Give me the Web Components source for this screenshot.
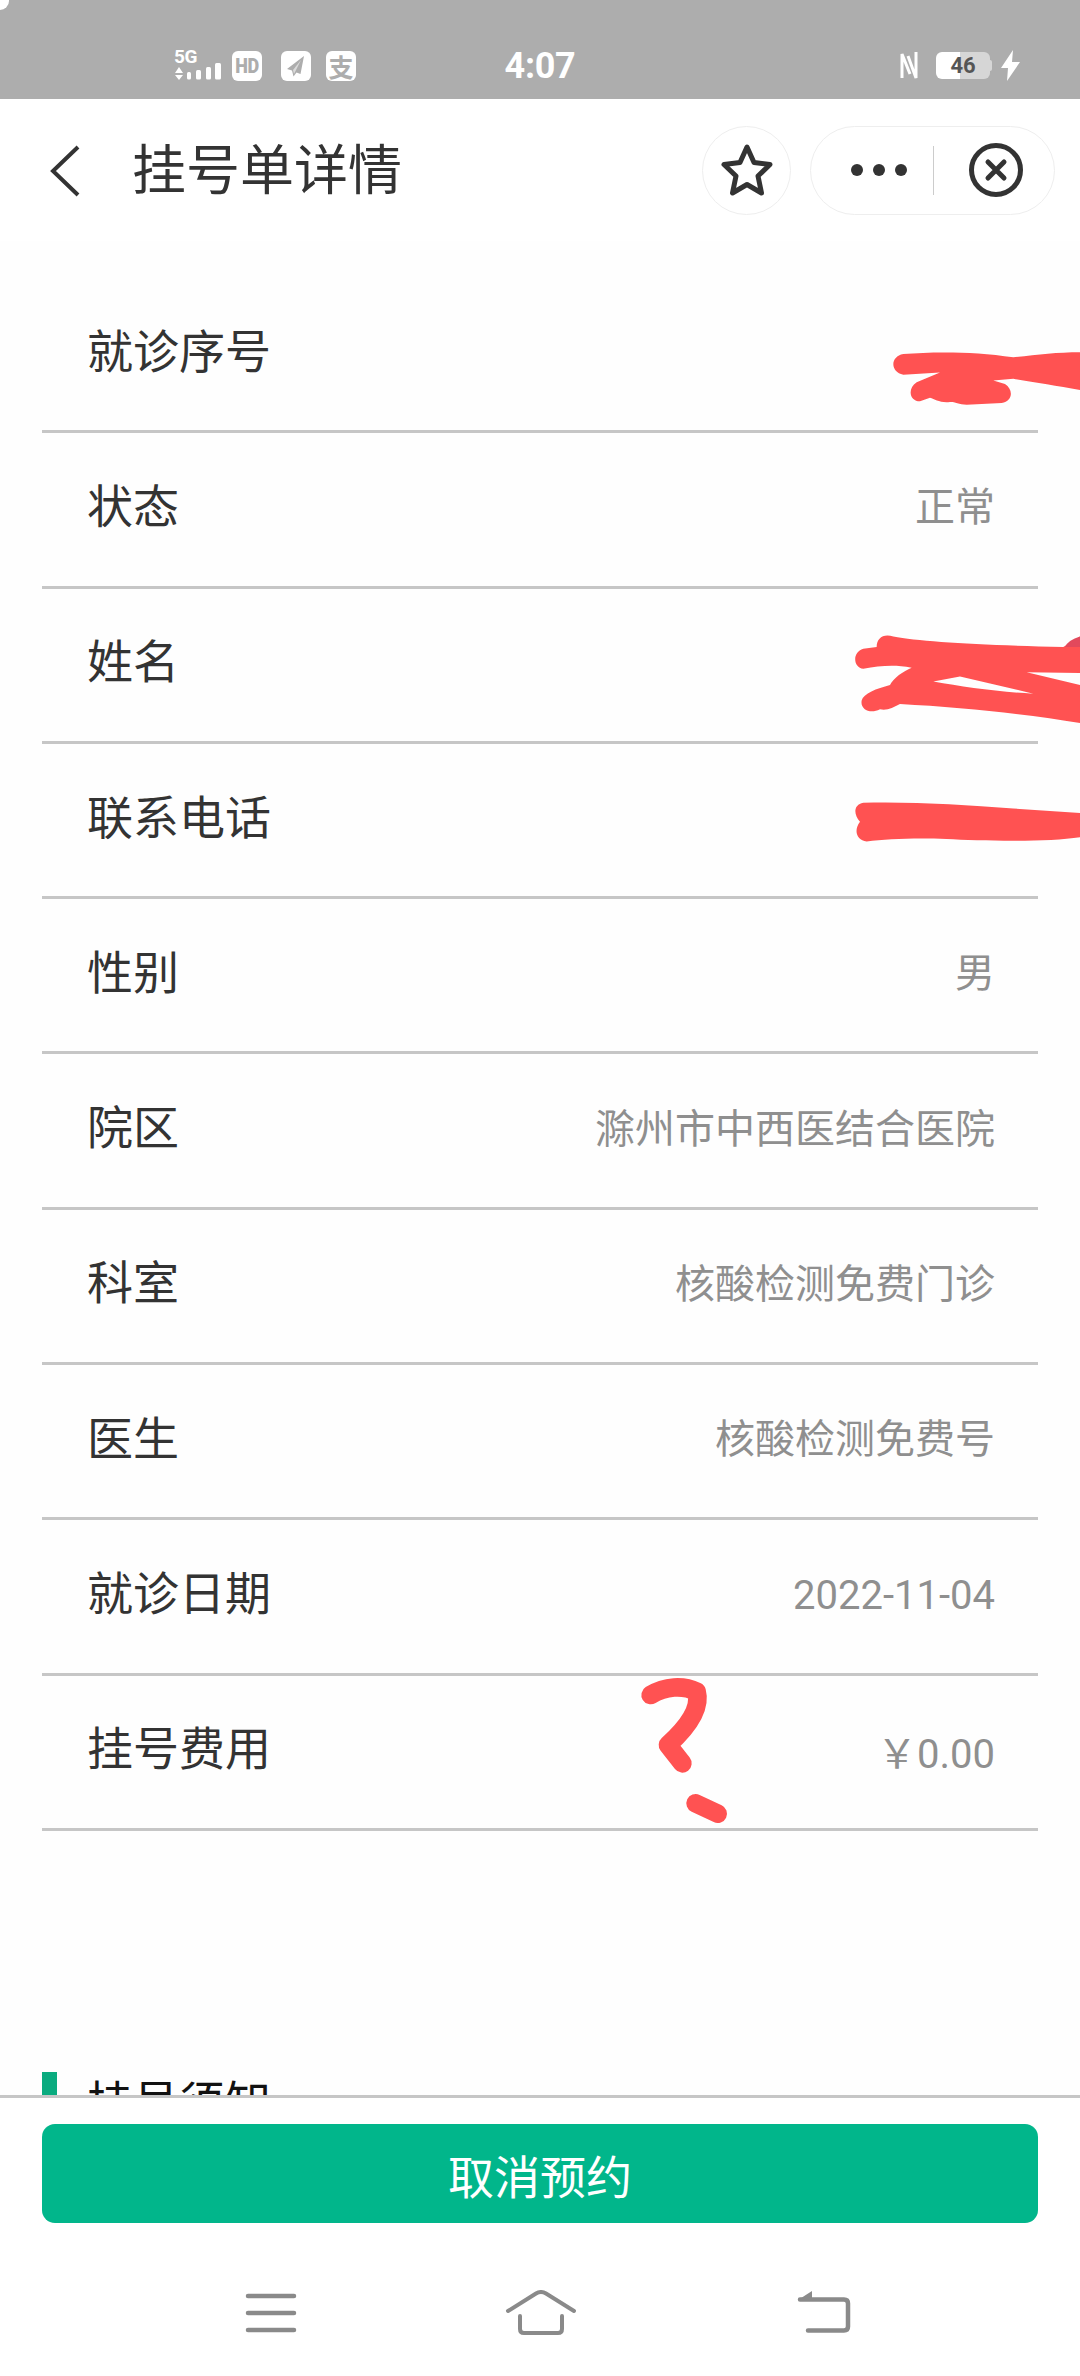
<!DOCTYPE html>
<html lang="zh-CN">
<head>
<meta charset="utf-8">
<title>挂号单详情</title>
<style>
html,body{margin:0;padding:0;background:#fff}
body{font-family:Roboto,"Noto Sans CJK SC",sans-serif}
.num{display:block;padding-top:8px}
</style>
</head>
<body>
<app-screen>
  <status-bar></status-bar>
  <title-bar>挂号单详情</title-bar>
  <main-area>
    <detail-list>
      <detail-row>就诊序号</detail-row>
      <detail-row>状态<span slot="value">正常</span></detail-row>
      <detail-row>姓名</detail-row>
      <detail-row>联系电话</detail-row>
      <detail-row>性别<span slot="value">男</span></detail-row>
      <detail-row>院区<span slot="value">滁州市中西医结合医院</span></detail-row>
      <detail-row>科室<span slot="value">核酸检测免费门诊</span></detail-row>
      <detail-row>医生<span slot="value">核酸检测免费号</span></detail-row>
      <detail-row>就诊日期<span slot="value" class="num">2022-11-04</span></detail-row>
      <detail-row>挂号费用<span slot="value" class="num" style="font-family:'Noto Sans CJK SC',sans-serif"><span>&#xFFE5;</span><span style="font-family:Roboto,sans-serif">0.00</span></span></detail-row>
    </detail-list>
    <section-title>挂号须知</section-title>
  </main-area>
  <action-footer>取消预约</action-footer>
  <nav-keys></nav-keys>
  <scribble-layer></scribble-layer>
</app-screen>
<script>
function def(name, html){
  customElements.define(name, class extends HTMLElement{
    constructor(){super();this.attachShadow({mode:'open'}).innerHTML=html;}
  });
}
def('app-screen',`<style>:host{display:flex;flex-direction:column;position:relative;width:1080px;height:2376px;overflow:hidden;background:#fff;font-family:Roboto,"Noto Sans CJK SC",sans-serif}</style><slot></slot>`);

def('status-bar',`<style>
:host{display:grid;grid-template-columns:1fr auto 1fr;align-items:center;height:99px;box-sizing:border-box;padding-top:32px;background:#adadad;color:#fff;position:relative;flex:none}
.corner{position:absolute;left:0;top:0;width:9px;height:10px;background:#fff;border-bottom-right-radius:9px}
.left{display:flex;align-items:center;padding-left:174px}
.right{display:flex;align-items:center;justify-content:flex-end;padding-right:60px}
.sig{width:42px;height:31px;margin-right:16px;position:relative;display:block}
.five{position:absolute;left:0;top:-3px;font:700 19px/20px Roboto,sans-serif;letter-spacing:-.5px}
.tile{width:30px;height:30px;border-radius:6px;background:#fff;color:#adadad;display:flex;align-items:center;justify-content:center;margin-right:19px}
.hd{font:900 20px/1 Roboto,sans-serif;letter-spacing:-.5px;transform:scaleX(.9)}
.zhi{font:700 25px/30px "Noto Sans CJK SC",sans-serif}
.time{font:700 36px/1 Roboto,sans-serif;letter-spacing:-.3px}
.batt{width:54px;height:27px;margin:0 11px 0 18px;border-radius:6px;background:linear-gradient(90deg,#fff 0 24px,#d6d6d6 24px);color:#555;font:700 22px/27px Roboto,sans-serif;text-align:center;position:relative;display:block}
.batt i{position:absolute;right:-2px;top:8px;width:2px;height:11px;background:#d6d6d6;border-radius:0 2px 2px 0}
svg{display:block}
</style>
<div class="corner"></div>
<div class="left">
  <span class="sig"><span class="five">5G</span>
    <svg width="48" height="31" viewBox="0 0 48 31" style="position:absolute;left:0;top:0"><path fill="#fff" d="M5 17l4 6H1zM1 25h8l-4 5z"/><rect x="13" y="22" width="4" height="7.500" rx="1.500" fill="#fff"/><rect x="22" y="20" width="5" height="9.500" rx="1.500" fill="#fff"/><rect x="32" y="17" width="5" height="12.500" rx="1.500" fill="#fff"/><rect x="41" y="13" width="6" height="16.500" rx="1.500" fill="#fff"/></svg>
  </span>
  <span class="tile"><span class="hd">HD</span></span>
  <span class="tile" style="margin-right:15px"><svg width="30" height="30" viewBox="0 0 30 30"><path fill="#adadad" d="M23 5L6 18l5 1.500 1.500 6 3-4 4 1.500z"/><path fill="#fff" d="M20 9l-8 10 1 4z" opacity=".55"/></svg></span>
  <span class="tile" style="margin-right:0"><span class="zhi">支</span></span>
</div>
<div class="time">4:07</div>
<div class="right">
  <svg width="18" height="31" viewBox="0 0 18 31"><path d="M2 28V4l8 20M16 2v26L8 6" fill="none" stroke="#fff" stroke-width="3"/></svg>
  <span class="batt">46<i></i></span>
  <svg width="19" height="31" viewBox="0 0 19 31"><path fill="#fff" d="M12 0L0 18h7L6 31l13-19h-8z"/></svg>
</div>`);

def('title-bar',`<style>
:host{display:flex;align-items:center;height:142px;flex:none;position:relative;color:#333;font-size:54px;font-family:"Noto Sans CJK SC",sans-serif;font-weight:400}
.back{margin-left:48px;width:34px;height:54px;display:block;margin-top:1px}
.t{margin-left:50px;flex:1;line-height:1;margin-top:-6px}
.star{width:89px;height:89px;box-sizing:border-box;border:1px solid #eee;border-radius:50%;display:flex;align-items:center;justify-content:center;margin-right:19px}
.star svg{margin-left:1px}
.cap{width:245px;height:89px;box-sizing:border-box;border:1px solid #eee;border-radius:45px;display:flex;align-items:center;margin-right:25px;position:relative}
.sep{width:1px;height:49px;background:#ccc;margin:0 34px 0 25px}
.dots{margin-left:39px;display:block}
svg{display:block}
</style>
<svg class="back" viewBox="0 0 34 54"><path d="M30 3L5 27l25 24" fill="none" stroke="#333" stroke-width="4"/></svg>
<div class="t"><slot></slot></div>
<div class="star"><svg width="52" height="54" viewBox="0 0 52 54"><path d="M26 4l7 15.500 16 2-12 11.500 3.500 17L26 41.500 11.500 50 15 33 3 21.500l16-2z" fill="none" stroke="#333" stroke-width="5" stroke-linejoin="round"/></svg></div>
<div class="cap">
  <svg class="dots" width="58" height="14" viewBox="0 0 58 14"><circle cx="7" cy="7" r="6" fill="#333"/><circle cx="29" cy="7" r="6" fill="#333"/><circle cx="51" cy="7" r="6" fill="#333"/></svg>
  <div class="sep"></div>
  <svg width="56" height="56" viewBox="0 0 56 56"><circle cx="28" cy="28" r="24.500" fill="none" stroke="#333" stroke-width="5"/><path d="M20 20l16 16M36 20L20 36" stroke="#333" stroke-width="5" stroke-linecap="round"/></svg>
</div>`);

def('main-area',`<style>:host{display:block;flex:1;min-height:0;overflow:hidden;background:#fefefe}</style><slot></slot>`);
def('detail-list',`<style>:host{display:block;margin:37px 42px 0}</style><slot></slot>`);
def('detail-row',`<style>
:host{display:flex;align-items:center;justify-content:space-between;height:155.3px;box-sizing:border-box;padding:0 43px 13px 45px;border-bottom:3px solid #c6c6c6;font-family:"Noto Sans CJK SC",sans-serif;font-size:46px;color:#333}
.v{font-family:Roboto,"Noto Sans CJK SC",sans-serif;font-size:40px;color:#8f8f8f;margin-top:3px}
</style><div><slot></slot></div><div class="v"><slot name="value"></slot></div>`);
def('section-title',`<style>
:host{display:flex;align-items:flex-start;margin:241px 42px 0;font:400 46px/48px "Noto Sans CJK SC",sans-serif;color:#111}
.m{width:15px;height:48px;background:#0aab7f;margin-right:30px;flex:none}
</style><span class="m"></span><span style="margin-top:3px"><slot></slot></span>`);
def('action-footer',`<style>
:host{display:block;flex:none;box-sizing:border-box;border-top:3px solid #c6c6c6;padding:26px 42px 0;background:#fff}
.b{height:99px;border-radius:13px;background:#01b68b;color:#fff;display:flex;align-items:center;justify-content:center;font:400 46px/1 "Noto Sans CJK SC",sans-serif}
</style><div class="b"><slot></slot></div>`);
def('nav-keys',`<style>
:host{display:flex;flex:none;align-items:flex-start;height:153px;box-sizing:border-box;padding:67px 0 0 245px;background:#fff}
svg{display:block}
</style>
<svg width="52" height="44" viewBox="0 0 52 44"><path d="M3 6h46M3 23h46M3 40h46" stroke="#8a8a8a" stroke-width="4.500" stroke-linecap="round" fill="none"/></svg>
<svg width="72" height="46" viewBox="0 0 72 46" style="margin-left:208px"><path d="M3 21L31 3.500Q36 .5 41 3.500L69 21" stroke="#8a8a8a" stroke-width="4" stroke-linecap="round" fill="none"/><path d="M15 26v13q0 4 4 4h34q4 0 4-4V26" stroke="#8a8a8a" stroke-width="4" stroke-linecap="round" fill="none"/></svg>
<svg width="54" height="44" viewBox="0 0 54 44" style="margin-left:220px"><path d="M1 10L15 1v9z" fill="#8a8a8a"/><path d="M3 9.500h44q4 0 4 4v23q0 4-4 4H11" stroke="#8a8a8a" stroke-width="4.500" stroke-linecap="round" fill="none"/></svg>`);

def('scribble-layer',`<style>:host{position:absolute;left:0;top:0;width:1080px;height:2376px;pointer-events:none}svg{display:block}</style>
<svg width="1080" height="2376" viewBox="0 0 1080 2376">
<g transform="translate(680 320) scale(.33333 .346)" fill="#ff5252">
<path d="M670 98C760 92 880 90 1000 108C1070 100 1130 93 1200 93L1200 202C1130 190 1060 180 1000 170L940 175L975 185C1000 200 1000 235 965 240L860 245C835 243 820 235 810 237C780 240 765 230 750 225L720 235C690 235 680 200 710 180L780 152L670 158C630 150 630 105 670 98Z"/>
<path fill-rule="evenodd" d="M550 950L590 945C590 920 610 905 640 915C720 930 900 940 1150 945L1200 915L1200 1020L1040 1018L1200 1055L1200 1165C1050 1140 850 1120 660 1110C640 1120 620 1130 600 1125C570 1140 540 1125 545 1100C550 1080 590 1065 630 1055C640 1035 670 1015 695 1005C640 995 600 1000 550 1008C520 1005 515 960 550 950ZM760 1045L840 1030L1060 1080C950 1075 850 1060 760 1045Z"/>
<path fill="#e2495c" d="M1155 945Q1165 925 1200 915V945Z"/>
<path d="M550 1395C700 1392 850 1400 1000 1412L1200 1425L1200 1495C1100 1510 900 1505 800 1500C700 1497 620 1500 560 1507C530 1505 520 1475 540 1450C520 1430 520 1400 550 1395Z"/>
</g>
<g transform="translate(600 1650) scale(.33333)" fill="none" stroke="#ff5252" stroke-width="56" stroke-linecap="round" stroke-linejoin="round">
<path d="M152 135C195 108 250 105 290 125C302 170 270 225 204 285L247 340"/>
<path d="M287 460L353 491"/>
</g>
</svg>`);
</script>
</body>
</html>
